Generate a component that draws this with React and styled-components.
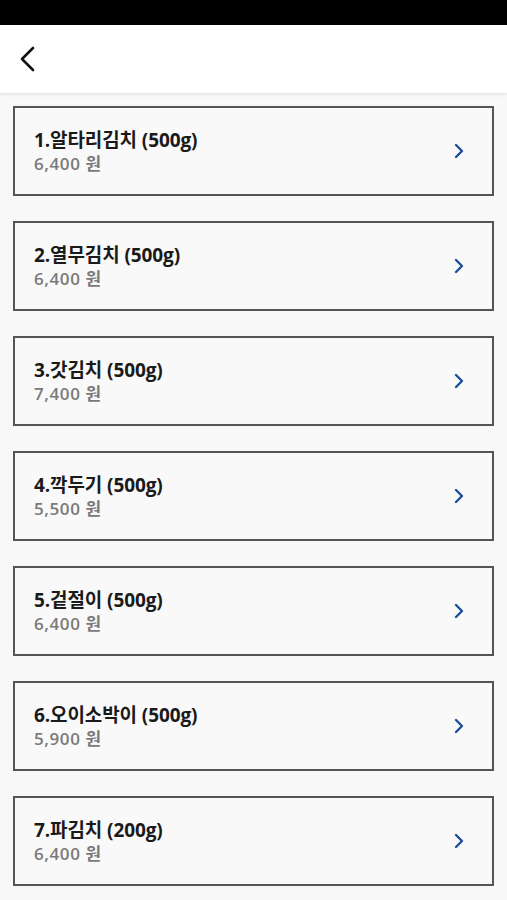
import React from "react";
import styled, { createGlobalStyle } from "styled-components";

const Global = createGlobalStyle`
  html, body { margin: 0; padding: 0; background: #f8f8f8; }
  body { font-family: "Open Sans", "Noto Sans CJK KR", sans-serif; }
`;

const StatusBar = styled.div`
  height: 25px;
  background: #000;
`;

const Header = styled.header`
  height: 68px;
  background: #fff;
  display: flex;
  align-items: center;
  padding-left: 19px;
  box-shadow: 0 1px 4px rgba(0, 0, 0, 0.12);
  position: relative;
  z-index: 1;
`;

const BackButton = styled.button`
  border: none;
  background: none;
  padding: 0;
  display: flex;
  cursor: pointer;
`;

const List = styled.main`
  display: flex;
  flex-direction: column;
  gap: 25px;
  padding: 13px 13px 20px;
`;

const Card = styled.div`
  height: 90px;
  box-sizing: border-box;
  border: 2px solid #555;
  background: #f9f9f9;
  display: flex;
  align-items: center;
  justify-content: space-between;
  padding: 0 27px 0 19px;
`;

const Info = styled.div`
  display: flex;
  flex-direction: column;
`;

const Title = styled.div`
  font-size: 19px;
  font-weight: 700;
  color: #1a1a1a;
  line-height: 25px;
  letter-spacing: -0.1px;
`;

const Price = styled.div`
  font-size: 17px;
  font-weight: 600;
  color: #7a7a7a;
  line-height: 22px;
  letter-spacing: 0.6px;
`;

const items = [
  ["1.알타리김치 (500g)", "6,400 원"],
  ["2.열무김치 (500g)", "6,400 원"],
  ["3.갓김치 (500g)", "7,400 원"],
  ["4.깍두기 (500g)", "5,500 원"],
  ["5.겉절이 (500g)", "6,400 원"],
  ["6.오이소박이 (500g)", "5,900 원"],
  ["7.파김치 (200g)", "6,400 원"],
];

export default function App() {
  return (
    <>
      <Global />
      <StatusBar />
      <Header>
        <BackButton aria-label="back">
          <svg width="18" height="26" viewBox="0 0 18 26">
            <path d="M14 2 L3 13 L14 24" fill="none" stroke="#111" strokeWidth="2.6" strokeLinecap="round" strokeLinejoin="round" />
          </svg>
        </BackButton>
      </Header>
      <List>
        {items.map(([t, p]) => (
          <Card key={t}>
            <Info>
              <Title>{t}</Title>
              <Price>{p}</Price>
            </Info>
            <svg width="12" height="16" viewBox="0 0 12 16">
              <path d="M3 2 L9 8 L3 14" fill="none" stroke="#1c4f9c" strokeWidth="2.4" strokeLinecap="round" strokeLinejoin="round" />
            </svg>
          </Card>
        ))}
      </List>
    </>
  );
}
